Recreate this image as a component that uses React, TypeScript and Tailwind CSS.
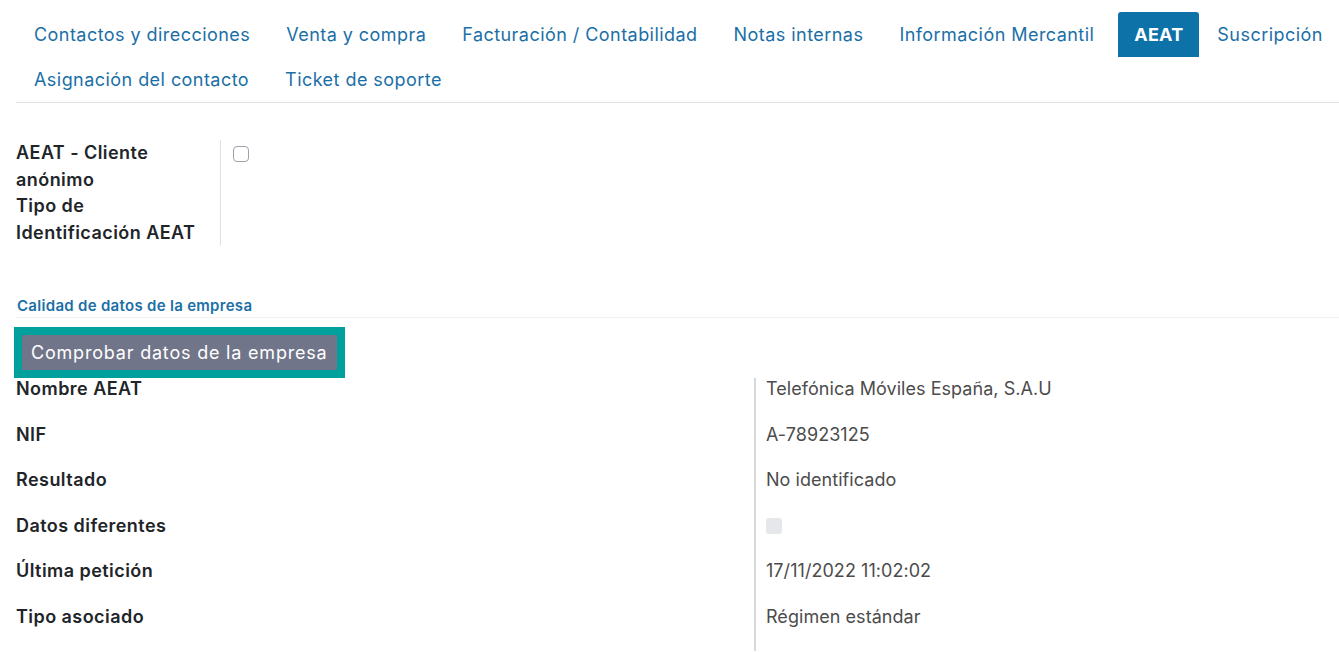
import { Fragment } from "react"

const tabRows = [
  [
    "Contactos y direcciones",
    "Venta y compra",
    "Facturación / Contabilidad",
    "Notas internas",
    "Información Mercantil",
    "AEAT",
    "Suscripción",
  ],
  ["Asignación del contacto", "Ticket de soporte"],
]

const rows: { label: string; value: string | null }[] = [
  { label: "Nombre AEAT", value: "Telefónica Móviles España, S.A.U" },
  { label: "NIF", value: "A-78923125" },
  { label: "Resultado", value: "No identificado" },
  { label: "Datos diferentes", value: null },
  { label: "Última petición", value: "17/11/2022 11:02:02" },
  { label: "Tipo asociado", value: "Régimen estándar" },
]

export default function App() {
  return (
    <div className="min-h-[652px] w-[1339px] overflow-hidden bg-white font-['Inter',sans-serif] tracking-[0.45px] text-[#212529]">
      <nav className="ml-4 border-b border-[#dee2e6] pt-3">
        {tabRows.map((tabs, rowIndex) => (
          <div className="flex whitespace-nowrap" key={rowIndex}>
            {tabs.map((tab) =>
              tab === "AEAT" ? (
                <span
                  className="ml-[6px] flex h-[45px] items-center rounded-t-[3px] bg-[#0d72a8] px-[16px] text-[18px] font-bold tracking-[0.2px] text-white"
                  key={tab}
                >
                  {tab}
                </span>
              ) : (
                <span
                  className="flex h-[45px] items-center px-[18px] text-[18px] text-[#1b6fa6]"
                  key={tab}
                >
                  {tab}
                </span>
              )
            )}
          </div>
        ))}
      </nav>

      <div className="ml-4 mt-[37px] flex">
        <div className="w-[205px] border-r border-[#dee2e6] pr-[12px] text-[18px] font-semibold leading-[26.5px]">
          <div>AEAT - Cliente anónimo</div>
          <div>Tipo de Identificación AEAT</div>
        </div>
        <div className="pl-[12px] pt-[6px]">
          <span className="block size-4 rounded-[4px] border border-[#9ca3af] bg-white" />
        </div>
      </div>

      <div className="ml-4 mt-[50px] border-b border-[#f1f1f1] pb-[1px] pl-px text-[15px] font-semibold leading-[20px] tracking-[0.3px] text-[#1b6fa6]">
        Calidad de datos de la empresa
      </div>

      <div className="ml-[14px] mt-[9px] inline-flex border-[8px] border-[#00a09d]">
        <button
          className="h-[35px] bg-[#71758a] px-[9px] text-[18px] tracking-[0.8px] text-white"
          type="button"
        >
          Comprobar datos de la empresa
        </button>
      </div>

      <div className="ml-4 grid grid-cols-[738px_1fr]">
        {rows.map((row) => (
          <Fragment key={row.label}>
            <div className="h-[45.5px] text-[18px] font-semibold leading-[22px]">
              {row.label}
            </div>
            <div className="h-[45.5px] border-l-2 border-[#d8d8d8] pl-[10px] text-[18px] leading-[22px] tracking-[0.05px] text-[#4c4c4c]">
              {row.value === null ? (
                <span className="mt-[3px] block size-4 rounded-[3px] bg-[#e5e7eb]" />
              ) : (
                <span className="block">{row.value}</span>
              )}
            </div>
          </Fragment>
        ))}
      </div>
    </div>
  )
}
